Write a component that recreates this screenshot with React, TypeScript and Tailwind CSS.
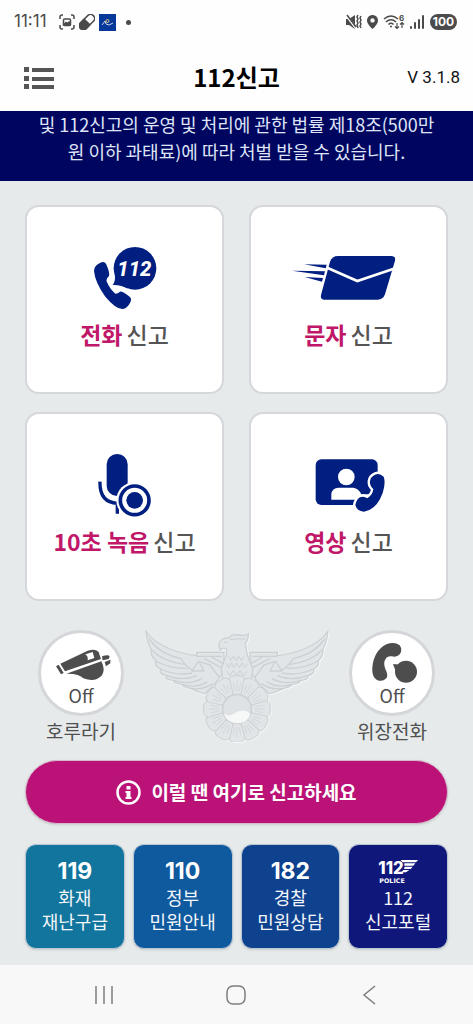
import type { ReactNode } from 'react';

const NAVY = '#001f80';
const GREY = '#4d4d4d';

function PhoneIcon() {
  return (
    <svg viewBox="162 156 330 192" className="h-16 w-[110px]" fill={NAVY} aria-hidden="true">
      <path d="M240 212Q262 194 270 206Q282 232 279 243Q268 254 273 262Q283 284 298 296Q306 296 312 290Q318 288 342 306Q348 312 344 320Q334 340 320 342Q300 343 268 305Q237 262 234 228Q234 218 240 212Z" />
      <circle cx="357" cy="220" r="64" />
      <path d="M296 236Q300 258 290 270Q312 268 335 281Z" />
      <text
        x="355"
        y="242"
        textAnchor="middle"
        fill="#fff"
        className="font-['Roboto',sans-serif] text-[61px] font-extrabold italic"
      >
        112
      </text>
    </svg>
  );
}

function MailIcon() {
  return (
    <svg viewBox="160 156 330 192" className="h-16 w-[110px] overflow-visible" fill={NAVY} aria-hidden="true">
      <path d="M292 183H453Q466 184 463 197L433 298Q427 314 411 314H250Q238 313 241 300L268 200Q274 183 292 183Z" />
      <path d="M256 217L350 258L466 219" fill="none" stroke="#fff" strokeWidth="8" />
      <path d="M190 208L258 209L255 220Z M154 227L253 229L250 241Z M192 246L247 249L244 260Z" />
    </svg>
  );
}

function MicIcon() {
  return (
    <svg viewBox="162 147 330 192" className="h-16 w-[110px]" fill={NAVY} aria-hidden="true">
      <rect x="272" y="147" width="63" height="126" rx="31" />
      <path d="M252 230Q250 292 304 295V326" fill="none" stroke={NAVY} strokeWidth="10" />
      <circle cx="356" cy="286" r="55" fill="#fff" />
      <circle cx="356" cy="286" r="43" fill="#fff" stroke={NAVY} strokeWidth="11" />
      <circle cx="356" cy="286" r="25" />
    </svg>
  );
}

function VideoIcon() {
  return (
    <svg viewBox="160 147 330 192" className="h-16 w-[110px]" fill={NAVY} aria-hidden="true">
      <rect x="225" y="163" width="186" height="137" rx="17" />
      <circle cx="317" cy="216" r="25" fill="#fff" />
      <path d="M272 284V268Q274 248 294 248H338Q354 250 362 268H384V284Z" fill="#fff" />
      <path
        d="M398 212Q414 200 429 215Q436 232 426 264Q408 314 370 320Q348 318 344 300Q347 284 358 277Q370 272 380 280Q396 270 398 252Q386 242 388 228Q390 216 398 212Z"
        stroke="#fff"
        strokeWidth="14"
        paintOrder="stroke"
      />
    </svg>
  );
}

function WhistleIcon() {
  return (
    <svg viewBox="87 81 192 126" className="h-[42px] w-16" fill={GREY} aria-hidden="true">
      <path d="M108 154L116 149L131 174L123 178Z" />
      <path d="M121 146L203 107Q228 99 236 112L243 132L135 169Z" />
      <path d="M196 118L218 111L223 129L203 136Q205 124 196 118Z" fill="#fff" />
      <path d="M139 176L244 139Q257 164 246 181Q226 204 190 190Q178 175 139 176Z" />
      <path d="M246 124Q266 118 269 124L266 132L248 136Z M254 141L271 134V145L258 154Z" />
    </svg>
  );
}

function FakeCallIcon() {
  return (
    <svg viewBox="389 81 192 126" className="h-[42px] w-16" fill={GREY} aria-hidden="true">
      <path d="M468 88Q492 78 508 91Q517 104 509 117Q498 129 484 124Q474 122 468 128Q457 142 465 162Q475 180 468 190Q456 202 440 195Q424 186 426 158Q430 108 468 88Z" />
      <circle cx="527" cy="170" r="33" />
      <path d="M488 147L512 149L496 168Z" />
    </svg>
  );
}

function EagleWing() {
  return (
    <>
      <path
        d="M378 48Q400 82 450 102Q490 118 530 122V112H612V165Q600 190 580 212L554 236Q534 232 512 220Q490 216 486 208Q462 206 460 196Q436 194 438 182Q416 176 422 162Q402 152 408 138Q390 120 394 104Q382 84 378 48Z"
        fill="#e2e5e8"
      />
      <path d="M388 72Q420 118 482 130Q500 160 524 168" />
      <path d="M394 104Q430 140 492 148M408 138Q450 162 502 160M422 162Q470 184 516 174M438 182Q490 200 530 182M460 196Q510 212 546 190M486 208Q530 222 562 200M512 220Q548 226 578 206" />
      <path d="M530 124H606M536 138L516 168H552ZM540 140L570 150L600 190M552 130L604 158M574 126L610 146" />
    </>
  );
}

function PoliceEmblem() {
  const petals = Array.from({ length: 12 }, (_, i) => i * 30);
  return (
    <svg
      viewBox="375 45 552 336"
      className="h-[112px] w-[184px] drop-shadow-[1px_1px_0_#f3f5f6]"
      fill="none"
      stroke="#cdd0d3"
      strokeWidth="4"
      strokeLinejoin="round"
      role="img"
      aria-label="경찰 상징"
    >
      <EagleWing />
      <g transform="translate(1302 0) scale(-1 1)">
        <EagleWing />
      </g>
      <path
        d="M610 215L604 160L618 122Q624 104 616 100Q604 98 602 106Q592 92 600 80Q610 68 628 68Q634 56 656 60Q676 64 686 56Q684 76 676 86L682 120L698 160L692 215Z"
        fill="#e2e5e8"
      />
      <path d="M612 82H624M630 74Q650 70 676 72M626 124L632 136L640 124L648 136L656 124L664 136L672 124M618 144L626 158L634 144L642 158L650 144L658 158L666 144L674 158L682 146M620 168L630 182L640 166L650 182L660 166L670 182L682 168" strokeWidth="3" />
      {petals.map((angle) => (
        <g key={angle} transform={`rotate(${angle} 651 282)`}>
          <path d="M639 238L626 196Q630 180 651 182Q672 180 676 196L663 238Z" fill="#e2e5e8" strokeWidth="3" />
          <path d="M651 198V228M640 204L645 228M662 204L657 228" strokeWidth="2" />
        </g>
      ))}
      <circle cx="651" cy="282" r="43" fill="#dfe2e4" />
      <path d="M610 295Q626 308 646 294Q668 278 692 296Q684 324 651 325Q622 324 610 295Z" fill="#f6f8f8" stroke="none" />
    </svg>
  );
}

function Police112Logo() {
  return (
    <svg viewBox="435 326 126 78" className="h-[26px] w-[42px]" fill="#fff" role="img" aria-label="112 POLICE">
      <text x="439" y="374" className="font-['Inter',sans-serif] text-[50px] font-extrabold">
        112
      </text>
      <path d="M506 332H558L552 339H512Z M517 342H550L544 349H517Z M518 352H542L536 359H516Z M514 362H532L522 369H508Z" />
      <text x="442" y="400" className="font-['DejaVu_Sans',sans-serif] text-[19px] font-bold">
        POLICE
      </text>
    </svg>
  );
}

function StatusBar() {
  return (
    <div className="flex h-11 items-center justify-between bg-[#fefefe] pr-4 pl-[14px] text-[#4b4b4b]">
      <div className="flex items-center gap-1">
        <span className="mr-2 font-['Inter',sans-serif] text-[17px]">11:11</span>
        <svg viewBox="0 0 16 16" className="size-4" fill="none" stroke="currentColor" strokeWidth="1.5" aria-hidden="true">
          <path d="M1 5V3Q1 1 3 1H4M12 1H13Q15 1 15 3V5M15 11V13Q15 15 13 15H12M4 15H3Q1 15 1 13V11" />
          <rect x="4.5" y="5" width="7" height="6.5" rx="1" />
          <path d="M5 10.5L7 8.5L8.5 9.5L10 8L11 10.5Z" fill="currentColor" />
        </svg>
        <svg viewBox="0 0 16 16" className="size-4" fill="none" stroke="currentColor" strokeWidth="1.5" aria-hidden="true">
          <g transform="rotate(45 8 8)">
            <rect x="4" y="-1" width="8" height="18" rx="4" />
            <path d="M4 8H12V13A4 4 0 0 1 4 13Z" fill="currentColor" />
          </g>
        </svg>
        <svg viewBox="0 0 17 17" className="size-[17px]" fill="none" aria-hidden="true">
          <rect width="17" height="17" fill="#06389a" />
          <path d="M3 11L6 7L7 10L10 11L14 9" stroke="#c9d4ec" />
          <circle cx="8.5" cy="7" r="1.5" stroke="#d8c58a" />
        </svg>
        <span className="ml-[6px] size-[5px] rounded-full bg-[#4b4b4b]" />
      </div>
      <div className="flex items-center gap-[5px]">
        <svg viewBox="0 0 16 16" className="size-4" fill="currentColor" aria-hidden="true">
          <path d="M0 5H3L9 1V15L3 11H0Z" />
          <path d="M0 1L10 14" stroke="#fefefe" strokeWidth="2.5" />
          <path d="M1 1L10 13M12 1L11 3L12 5L11 7L12 9L11 11L12 14M15 2L14 4L15 6L14 8L15 10L14 12L15 14" fill="none" stroke="currentColor" strokeWidth="1.5" />
        </svg>
        <svg viewBox="0 0 11 14" className="h-[14px] w-[11px]" fill="currentColor" aria-hidden="true">
          <path fillRule="evenodd" d="M5.5 0A5.3 5.3 0 0 1 11 5.4Q11 9 5.5 14Q0 9 0 5.4A5.3 5.3 0 0 1 5.5 0ZM5.5 3.2A2.2 2.2 0 1 0 5.5 7.6A2.2 2.2 0 1 0 5.5 3.2Z" />
        </svg>
        <svg viewBox="0 0 22 16" className="h-4 w-[22px]" fill="none" stroke="currentColor" strokeWidth="1.5" aria-hidden="true">
          <path d="M1 5Q8 -1 15 5M3 8Q8 3.5 13 8M5.5 10.5Q8 8 10.5 10.5" />
          <circle cx="8" cy="12.5" r="1" fill="currentColor" stroke="none" />
          <path d="M14 9V14M12 12.5L14 14.5L16 12.5M19 14V9M17 10.5L19 8.5L21 10.5" strokeWidth="1.2" />
          <text x="16" y="7" fill="currentColor" stroke="none" className="font-['Inter',sans-serif] text-[8px] font-bold">
            6
          </text>
        </svg>
        <svg viewBox="0 0 15 14" className="h-[14px] w-[15px]" fill="currentColor" aria-hidden="true">
          <rect x="0" y="11" width="2" height="3" rx="1" />
          <rect x="4" y="7" width="2" height="7" rx="1" />
          <rect x="8" y="4" width="2" height="10" rx="1" />
          <rect x="12" y="0" width="2" height="14" rx="1" />
        </svg>
        <span className="flex h-4 w-[27px] items-center justify-center rounded-full bg-[#4b4b4b] font-['Inter',sans-serif] text-[12px] font-bold text-white">
          100
        </span>
      </div>
    </div>
  );
}

interface ReportCardProps {
  accent: string;
  icon: ReactNode;
}

function ReportCard({ accent, icon }: ReportCardProps) {
  return (
    <button
      type="button"
      className="flex flex-col items-center rounded-[14px] border-2 border-[#d6d7da] bg-white pt-10 pb-[42px]"
    >
      {icon}
      <span className="mt-[7px] flex gap-1 text-[23px] leading-8 font-bold text-[#555]">
        <span className="text-[#c01769]">{accent}</span>
        <span className="font-medium">신고</span>
      </span>
    </button>
  );
}

interface ToggleProps {
  label: string;
  icon: ReactNode;
}

function Toggle({ label, icon }: ToggleProps) {
  return (
    <button type="button" aria-pressed="false" className="flex flex-col items-center text-[#4f4f4f]">
      <span className="flex size-[86px] flex-col items-center rounded-full border-3 border-[#d5d6d9] bg-white pt-[9px]">
        {icon}
        <span className="text-[18px] leading-[22px]">Off</span>
      </span>
      <span className="mt-[3px] text-[19px] leading-6">{label}</span>
    </button>
  );
}

const cards = [
  { accent: '전화', icon: <PhoneIcon /> },
  { accent: '문자', icon: <MailIcon /> },
  { accent: '10초 녹음', icon: <MicIcon /> },
  { accent: '영상', icon: <VideoIcon /> },
];

const agencies = [
  { head: '119', lines: ['화재', '재난구급'], color: 'bg-[#12759d]' },
  { head: '110', lines: ['정부', '민원안내'], color: 'bg-[#0f5a9e]' },
  { head: '182', lines: ['경찰', '민원상담'], color: 'bg-[#0e418e]' },
  { head: <Police112Logo />, lines: ['112', '신고포털'], color: 'bg-[#10177a]' },
];

export default function App() {
  return (
    <div className="flex min-h-screen flex-col bg-[#e6eaeb] font-['Noto_Sans_CJK_KR',sans-serif]">
      <StatusBar />

      <header className="grid h-[67px] grid-cols-3 items-center bg-[#fefefe] px-[13px]">
        <button type="button" aria-label="메뉴" className="ml-[11px] justify-self-start text-[#555]">
          <svg viewBox="0 0 30 24" className="h-6 w-[30px]" fill="currentColor" aria-hidden="true">
            <path d="M0 1H5V6H0ZM8 2H30V6H8ZM0 10H5V15H0ZM8 11H30V15H8ZM0 18H5V23H0ZM8 19H30V23H8Z" />
          </svg>
        </button>
        <h1 className="justify-self-center pb-[2px] text-2xl font-bold text-black">112신고</h1>
        <span className="justify-self-end font-['Roboto',sans-serif] text-[17px] text-[#111]">V 3.1.8</span>
      </header>

      <p className="bg-[#000660] pb-4 text-center text-[18px] leading-[27px] text-[#dfe4f7]">
        및 112신고의 운영 및 처리에 관한 법률 제18조(500만
        <br />원 이하 과태료)에 따라 처벌 받을 수 있습니다.
      </p>

      <main className="flex-1 px-[25px] pt-6 pb-4">
        <div className="grid grid-cols-2 gap-x-[25px] gap-y-[18px]">
          {cards.map((card) => (
            <ReportCard key={card.accent} accent={card.accent} icon={card.icon} />
          ))}
        </div>

        <div className="mt-[29px] flex items-start justify-between px-[13px]">
          <Toggle label="호루라기" icon={<WhistleIcon />} />
          <PoliceEmblem />
          <Toggle label="위장전화" icon={<FakeCallIcon />} />
        </div>

        <button
          type="button"
          className="mt-[17px] flex h-16 w-full items-center justify-center gap-[10px] rounded-full border border-[#d6b9cc] bg-[#ba1276] text-[19px] font-bold text-white shadow-sm"
        >
          <svg viewBox="0 0 25 25" className="size-[25px]" fill="#fff" aria-hidden="true">
            <circle cx="12.5" cy="12.5" r="11" fill="none" stroke="#fff" strokeWidth="2.5" />
            <path d="M10.5 6H14.5V9.5H10.5ZM9.5 11H14.5V17H15.5V19H9.5V17H10.5V13H9.5Z" />
          </svg>
          이럴 땐 여기로 신고하세요
        </button>

        <div className="mt-5 grid grid-cols-4 gap-2">
          {agencies.map((agency) => (
            <button
              key={agency.lines[1]}
              type="button"
              className={`flex flex-col items-center rounded-[11px] border border-[#b9c6d4] pt-3 pb-[15px] text-[18px] leading-6 text-[#f2f6fb] shadow-sm ${agency.color}`}
            >
              <span className="flex h-7 items-center font-['Inter',sans-serif] text-[23px] font-bold text-white">
                {agency.head}
              </span>
              <span>{agency.lines[0]}</span>
              <span>{agency.lines[1]}</span>
            </button>
          ))}
        </div>
      </main>

      <nav className="flex h-[59px] items-center justify-around bg-[#f8f8f8] px-[38px] text-[#7d7d7d]">
        <button type="button" aria-label="최근 앱">
          <svg viewBox="0 0 20 20" className="size-5" fill="none" stroke="currentColor" strokeWidth="1.5" aria-hidden="true">
            <path d="M2 1V19M10 1V19M18 1V19" />
          </svg>
        </button>
        <button type="button" aria-label="홈">
          <svg viewBox="0 0 20 20" className="size-5" fill="none" stroke="currentColor" strokeWidth="1.5" aria-hidden="true">
            <rect x="1" y="1" width="18" height="18" rx="6" />
          </svg>
        </button>
        <button type="button" aria-label="뒤로">
          <svg viewBox="0 0 20 20" className="size-5" fill="none" stroke="currentColor" strokeWidth="1.5" aria-hidden="true">
            <path d="M16 1L5 10L16 19" />
          </svg>
        </button>
      </nav>
    </div>
  );
}
